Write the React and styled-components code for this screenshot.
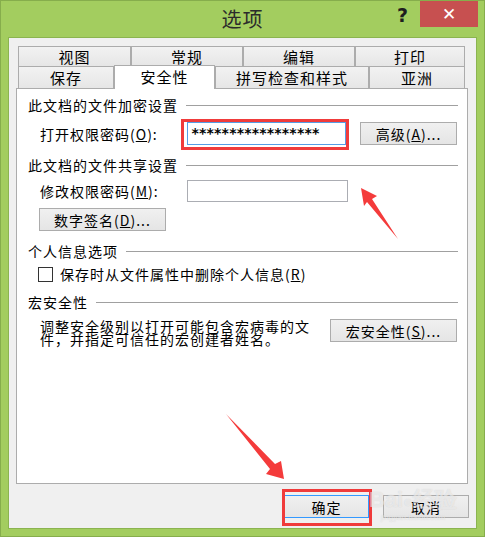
import React from 'react'
import styled, { createGlobalStyle } from 'styled-components'

const GlobalStyle = createGlobalStyle`
  body {
    margin: 0;
    background: #ffffff;
    font-family: "Noto Sans CJK SC", "Noto Sans", sans-serif;
  }
`

const Window = styled.div`
  position: relative;
  width: 485px;
  height: 537px;
  box-sizing: border-box;
  border: 1px solid #86ad4c;
  background: #a3cd5f;
  display: flex;
  flex-direction: column;
`

const TitleBar = styled.div`
  height: 36px;
  display: grid;
  grid-template-columns: 1fr auto 1fr;
`

const Title = styled.div`
  grid-column: 2;
  font-size: 20px;
  line-height: 36px;
  color: #2b2b2b;
  letter-spacing: 1px;
`

const Controls = styled.div`
  grid-column: 3;
  display: flex;
  justify-content: flex-end;
  align-items: flex-start;
  padding-right: 6px;
`

const HelpGlyph = styled.div`
  font-family: "DejaVu Sans", sans-serif;
  font-weight: bold;
  font-size: 19px;
  line-height: 28px;
  color: #1e1e1e;
  margin-right: 12px;
`

const CloseButton = styled.div`
  width: 58px;
  height: 26px;
  background: #c75050;
  color: #ffffff;
  display: flex;
  align-items: center;
  justify-content: center;
  font-family: "DejaVu Sans", sans-serif;
  font-size: 17px;
  font-weight: bold;
`

const Body = styled.div`
  flex: 1;
  margin: 0 7px 7px 7px;
  border: 1px solid #8bb450;
  background: #f0f0f0;
  padding: 8px 8px 9px 7px;
  display: flex;
  flex-direction: column;
  font-size: 14px;
  letter-spacing: 1px;
  color: #000;
`

const TabRow = styled.div`
  display: flex;
  margin-left: 2px;
  height: ${p => p.h}px;
  align-items: flex-end;
`

const Tab = styled.div`
  width: ${p => p.w}px;
  box-sizing: border-box;
  height: ${p => (p.active ? p.h + 2 : p.h)}px;
  margin-bottom: ${p => (p.active ? -1 : 0)}px;
  position: relative;
  z-index: ${p => (p.active ? 2 : 0)};
  border: 1px solid #acacac;
  border-bottom: none;
  background: ${p => (p.active ? '#ffffff' : 'linear-gradient(#f2f2f2, #e6e6e6)')};
  text-align: center;
  line-height: ${p => p.h - 1}px;
  font-size: 15px;
`

const Panel = styled.div`
  height: 396px;
  box-sizing: border-box;
  border: 1px solid #acacac;
  background: #ffffff;
  padding: 7px 9px 0 11px;
  display: flex;
  flex-direction: column;
`

const SectionHeader = styled.div`
  display: flex;
  align-items: center;
  height: 18px;
  margin-top: ${p => p.mt || 0}px;
  &::after {
    content: '';
    flex: 1;
    height: 1px;
    background: #a0a0a0;
    margin-left: 8px;
  }
`

const FieldRow = styled.div`
  display: flex;
  align-items: center;
  margin-top: ${p => p.mt || 0}px;
  padding-left: ${p => p.pl || 12}px;
`

const Label = styled.div`
  width: 147px;
`

const Highlight = styled.span`
  position: relative;
  display: inline-flex;
  &::after {
    content: '';
    position: absolute;
    top: ${p => p.t}px;
    left: ${p => p.l}px;
    right: ${p => p.r}px;
    bottom: ${p => p.b}px;
    border: 3px solid #f03b3b;
    pointer-events: none;
  }
`

const TextBox = styled.div`
  width: ${p => p.w}px;
  height: ${p => p.h}px;
  box-sizing: border-box;
  border: 1px solid ${p => (p.focused ? '#569de5' : '#abadb3')};
  background: #ffffff;
  font-family: "DejaVu Sans Mono", monospace;
  font-size: 14px;
  letter-spacing: -0.9px;
  line-height: ${p => p.h - 2}px;
  padding-left: 3px;
  font-weight: bold;
`

const Button = styled.div`
  width: ${p => p.w}px;
  height: 23px;
  box-sizing: border-box;
  border: 1px solid ${p => (p.primary ? '#3399ff' : '#acacac')};
  background: linear-gradient(#f0f0f0, #e5e5e5);
  display: flex;
  align-items: center;
  justify-content: center;
  margin-left: ${p => p.ml || 0}px;
  font-size: 14px;
`

const CheckRow = styled.div`
  display: flex;
  align-items: center;
  margin-top: 5px;
  padding-left: 10px;
  height: 18px;
`

const CheckBox = styled.div`
  width: 15px;
  height: 15px;
  box-sizing: border-box;
  border: 1px solid #333333;
  background: #ffffff;
  margin-right: 7px;
`

const MacroRow = styled.div`
  display: flex;
  align-items: flex-start;
  margin-top: 8px;
  padding-left: 12px;
`

const MacroText = styled.div`
  width: 278px;
  line-height: 13px;
  margin-top: 1px;
`

const Footer = styled.div`
  display: flex;
  justify-content: flex-end;
  margin-top: 11px;
  margin-right: -1px;
`

const Watermark = styled.div`
  position: absolute;
  left: 368px;
  top: 488px;
  color: rgba(255, 255, 255, 0.55);
  text-shadow: 0 0 1px rgba(140, 140, 140, 0.35);
  font-family: "Liberation Sans", sans-serif;
  font-weight: bold;
  font-size: 22px;
  line-height: 22px;
  pointer-events: none;
  letter-spacing: 0;
  & small {
    display: block;
    font-size: 8px;
    line-height: 9px;
    font-weight: normal;
    text-align: center;
  }
`

const Overlay = styled.svg`
  position: absolute;
  left: 0;
  top: 0;
  pointer-events: none;
`

const topTabs = [
  { label: '视图', w: 113 },
  { label: '常规', w: 112 },
  { label: '编辑', w: 112 },
  { label: '打印', w: 110 }
]

const bottomTabs = [
  { label: '保存', w: 96 },
  { label: '安全性', w: 101, active: true },
  { label: '拼写检查和样式', w: 154 },
  { label: '亚洲', w: 96 }
]

function App() {
  return (
    <>
      <GlobalStyle />
      <Window>
        <TitleBar>
          <Title>选项</Title>
          <Controls>
            <HelpGlyph>?</HelpGlyph>
            <CloseButton>✕</CloseButton>
          </Controls>
        </TitleBar>
        <Body>
          <TabRow h={20}>
            {topTabs.map(t => (
              <Tab key={t.label} w={t.w} h={20}>{t.label}</Tab>
            ))}
          </TabRow>
          <TabRow h={22}>
            {bottomTabs.map(t => (
              <Tab key={t.label} w={t.w} h={22} active={t.active}>{t.label}</Tab>
            ))}
          </TabRow>
          <Panel>
            <SectionHeader>此文档的文件加密设置</SectionHeader>
            <FieldRow mt={8}>
              <Label>打开权限密码(<u>O</u>):</Label>
              <Highlight t={-3} l={-6} r={-3} b={-5}>
                <TextBox w={159} h={23} focused>*****************</TextBox>
              </Highlight>
              <Button w={97} ml={14}>高级(<u>A</u>)...</Button>
            </FieldRow>
            <SectionHeader mt={11}>此文档的文件共享设置</SectionHeader>
            <FieldRow mt={6}>
              <Label>修改权限密码(<u>M</u>):</Label>
              <TextBox w={161} h={22} />
            </FieldRow>
            <FieldRow mt={6} pl={11}>
              <Button w={127}>数字签名(<u>D</u>)...</Button>
            </FieldRow>
            <SectionHeader mt={11}>个人信息选项</SectionHeader>
            <CheckRow>
              <CheckBox />
              保存时从文件属性中删除个人信息(<u>R</u>)
            </CheckRow>
            <SectionHeader mt={10}>宏安全性</SectionHeader>
            <MacroRow>
              <MacroText>调整安全级别以打开可能包含宏病毒的文件，并指定可信任的宏创建者姓名。</MacroText>
              <Button w={127} ml={12}>宏安全性(<u>S</u>)...</Button>
            </MacroRow>
          </Panel>
          <Footer>
            <Highlight t={-6} l={-2} r={-3} b={-8}>
              <Button w={85} primary>确定</Button>
            </Highlight>
            <Button w={86} ml={14}>取消</Button>
          </Footer>
        </Body>
        <Watermark>
          Bai<span style={{ fontSize: 16 }}>●</span>经验
          <small>jingyan.baidu.com</small>
        </Watermark>
        <Overlay width="485" height="537" viewBox="0 0 485 537">
          <path d="M360 187 L376 195 L371 198 L397 238 L366 201 L363 205 Z" fill="#f43b3b" />
          <path d="M225 413 L274 463 L280 460 L283 478 L265 473 L269 468 Z" fill="#f43b3b" />
        </Overlay>
      </Window>
    </>
  )
}

export default App
